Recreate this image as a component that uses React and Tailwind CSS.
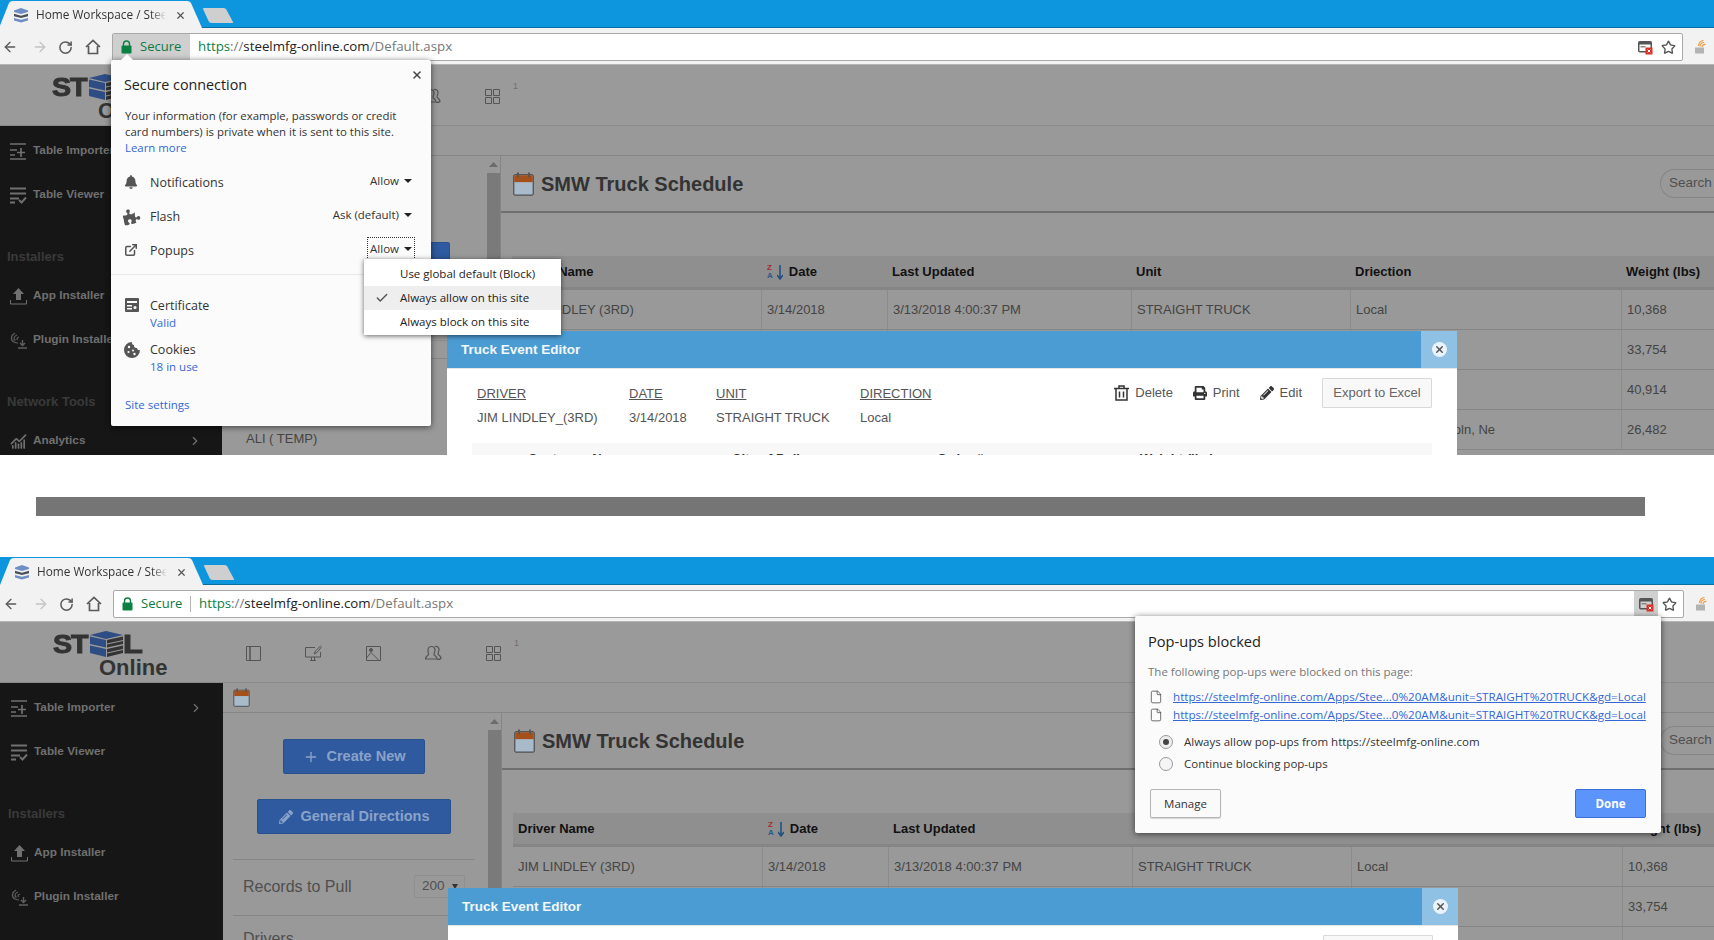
import { ArrowLeft, ArrowRight, RotateCw, Star, X, Check, ChevronRight, Plus, File, ExternalLink, ChartNoAxesCombined } from 'lucide-react'
import { FaBell, FaPuzzlePiece, FaPencilAlt, FaPrint } from 'react-icons/fa'

const uiFont = "font-['Open_Sans',sans-serif]"
const pageFont = "font-['Liberation_Sans',sans-serif]"

function Caret() {
    return (
        <svg width="8" height="4" viewBox="0 0 8 4" className="ml-[5px]">
            <path d="M0 0h8L4 4z" fill="#222" />
        </svg>
    )
}

function Lock() {
    return (
        <svg width="11" height="14" viewBox="0 0 11 14">
            <path d="M2.5 6V4a3 3 0 0 1 6 0v2" fill="none" stroke="#0b8043" strokeWidth="1.4" />
            <rect x="0.5" y="5.5" width="10" height="8" rx="1" fill="#0b8043" />
        </svg>
    )
}

function StackIcon() {
    return (
        <svg width="16" height="16" viewBox="0 0 16 16">
            <path d="M1 3.5 8 1l7 2.5v1.6L8 7 1 5.1z" fill="#6f8fc4" />
            <path d="M1 6.8 8 8.7l7-1.900v2.400L8 11 1 9.200z" fill="#4a4f5a" />
            <path d="M1 10.900 8 12.700l7-1.800v2.600L8 15.500l-7-2z" fill="#6f8fc4" />
        </svg>
    )
}

function CalendarIcon({ className }) {
    return (
        <svg viewBox="0 0 22 26" className={className}>
            <rect x="0.5" y="3" width="21" height="22" rx="1" fill="#a9bbcb" stroke="#333" />
            <rect x="1" y="3.5" width="20" height="7.5" fill="#a4501c" />
            <rect x="4" y="0.5" width="2" height="5" fill="#555" />
            <rect x="16" y="0.5" width="2" height="5" fill="#555" />
        </svg>
    )
}

function ImporterIcon() {
    return (
        <svg width="17" height="17" viewBox="0 0 17 17" fill="none" stroke="#707070" strokeWidth="1.7">
            <path d="M0 1h16M0 7h7M0 12h5M0 16h16M11 5v9M7 9.500h8" />
        </svg>
    )
}

function ViewerIcon() {
    return (
        <svg width="17" height="17" viewBox="0 0 17 17" fill="none" stroke="#707070" strokeWidth="1.900">
            <path d="M0 1.500h16M0 6.500h16M0 11.500h9M0 15.500h5M9 13l2.500 2.500L16 10.500" />
        </svg>
    )
}

function UploadIcon() {
    return (
        <svg width="17" height="17" viewBox="0 0 17 17">
            <path d="M8.500 0 14 6h-3v6H6V6H3z" fill="#707070" />
            <path d="M.5 12v4h16v-4" fill="none" stroke="#707070" />
        </svg>
    )
}

function PluginIcon() {
    return (
        <svg width="17" height="17" viewBox="0 0 17 17" fill="none" stroke="#5f5f5f" strokeWidth="1.200">
            <path d="M5 1C1 3 0 8 4 10c1 .5 2 1 4 1M7 3C4 4 3 7 5.500 8.500M9 5C7 5.500 6.500 7 7.500 8" />
            <path d="M12.500 8v5M10 11l2.500 2.500L15 11M8 16h9" strokeWidth="1.400" />
        </svg>
    )
}

function PopupBlockedIcon() {
    return (
        <svg width="15" height="15" viewBox="0 0 15 15">
            <rect x="0.75" y="1.750" width="12.500" height="10" rx="1" fill="none" stroke="#555" strokeWidth="1.500" />
            <rect x="1" y="2" width="12" height="2.500" fill="#555" />
            <rect x="2.500" y="6" width="5" height="1.500" fill="#888" />
            <rect x="7.500" y="7.500" width="7" height="7" fill="#d93025" />
            <path d="M9.700 9.700l2.600 2.600m0-2.600-2.600 2.600" stroke="#fff" strokeWidth="1" />
        </svg>
    )
}

function HomeIcon() {
    return (
        <svg width="16" height="16" viewBox="0 0 16 16" fill="none" stroke="#5a5a5a" strokeWidth="1.700">
            <path d="M1 8 8 1.500 15 8M3.500 7v7.500h9V7" />
        </svg>
    )
}

function ExtensionIcon() {
    return (
        <svg width="14" height="14" viewBox="0 0 14 14" fill="none">
            <path d="M1 7.500h9v6H1z" fill="#b3b3b3" />
            <path d="M6 6.500a4 4 0 0 1 4-4M8 7a3 3 0 0 1 3.500-2.500M4.500 6a6 6 0 0 1 5-5.500" stroke="#ef9a45" strokeWidth="1.200" />
        </svg>
    )
}

function TrashIcon() {
    return (
        <svg width="15" height="16" viewBox="0 0 15 16" fill="none" stroke="#333" strokeWidth="1.500">
            <path d="M0 3.500h15M5 3.500V1h5v2.500M2 3.500v11.500h11V3.500M5.500 6.500v6M9.500 6.500v6" />
        </svg>
    )
}

function CookieIcon() {
    return (
        <svg width="16" height="16" viewBox="0 0 16 16">
            <path d="M8 0a8 8 0 1 0 8 8c-1.500.5-3-.5-3-2-1.500.5-3.500-1-3-3C8.500 3 7.500 1.500 8 0z" fill="#555" />
            <circle cx="5" cy="5" r="1.200" fill="#fbfbfb" />
            <circle cx="4.500" cy="10" r="1.100" fill="#fbfbfb" />
            <circle cx="9" cy="8.500" r="1" fill="#fbfbfb" />
            <circle cx="10.500" cy="12" r="1.200" fill="#fbfbfb" />
        </svg>
    )
}

function SidebarItem({ icon, label, chevron }) {
    return (
        <div className="flex h-[44px] items-center pl-[11px] pr-[20px]">
            <span className="flex w-[23px] shrink-0">{icon}</span>
            <span className="text-[11.800px] font-bold text-[#707070]">{label}</span>
            {chevron && <ChevronRight className="ml-auto size-[14px] text-[#707070]" />}
        </div>
    )
}

function SidebarHeading({ label, className }) {
    return <div className={`flex h-[32px] items-center pl-[8px] text-[13px] font-bold text-[#3a3a3a] ${className}`}>{label}</div>
}

function Sidebar() {
    return (
        <aside className="w-[223px] shrink-0 bg-[#161616] pt-[3px]">
            <SidebarItem icon={<ImporterIcon />} label="Table Importer" chevron />
            <SidebarItem icon={<ViewerIcon />} label="Table Viewer" />
            <SidebarHeading label="Installers" className="mt-[24px]" />
            <div className="mt-px" />
            <SidebarItem icon={<UploadIcon />} label="App Installer" />
            <SidebarItem icon={<PluginIcon />} label="Plugin Installer" />
            <SidebarHeading label="Network Tools" className="mt-[24px]" />
            <div className="mt-px" />
            <SidebarItem icon={<ChartNoAxesCombined className="size-[17px] text-[#707070]" strokeWidth={2.4} />} label="Analytics" chevron />
        </aside>
    )
}

function LeftPanel() {
    return (
        <div className="w-[264px] shrink-0 pl-[10px] pr-[12px] pt-[26px]">
            <button className="mx-auto flex h-[35px] w-[142px] items-center justify-center gap-[8px] rounded-[2px] border border-[#27528f] bg-[#2f5a9f] text-[14.500px] font-bold text-[#8ba3c9]">
                <Plus className="size-[16px]" strokeWidth={2} />
                Create New
            </button>
            <button className="mx-auto mt-[25px] flex h-[35px] w-[194px] items-center justify-center gap-[8px] rounded-[2px] border border-[#27528f] bg-[#2f5a9f] text-[14.500px] font-bold text-[#8ba3c9]">
                <FaPencilAlt className="size-[14px]" />
                General Directions
            </button>
            <div className="mt-[25px] flex h-[57px] items-center border-y border-[#858585] pb-[2px] pl-[10px] pr-[10px]">
                <span className="text-[16px] text-[#4f4f4f]">Records to Pull</span>
                <span className="ml-auto flex h-[23px] w-[51px] items-center gap-[7px] rounded-[2px] border border-[#8f8f8f] pl-[7px] text-[13.500px] text-[#4f4f4f]">
                    200
                    <svg width="6" height="5" viewBox="0 0 6 5"><path d="M0 0h6L3 5z" fill="#333" /></svg>
                </span>
            </div>
            <div className="mt-[11px] pl-[10px] text-[16px] text-[#4f4f4f]">Drivers</div>
            <div className="mt-[35px] pl-[14px] text-[13px] text-[#444]">ALI ( TEMP)</div>
        </div>
    )
}

function Scrollbar() {
    return (
        <div className="flex w-[14px] shrink-0 flex-col items-center">
            <div className="flex h-[17px] items-center justify-center">
                <svg width="9" height="5" viewBox="0 0 9 5"><path d="M0 5h9L4.500 0z" fill="#6c6c6c" /></svg>
            </div>
            <div className="w-[13px] flex-1 bg-[#7a7a7a]" />
        </div>
    )
}

const columns = 'grid grid-cols-[249px_126px_244px_219px_271px_92px]'

function Row({ cells }) {
    return (
        <div className={`${columns} h-[40px] items-stretch border-b border-[#858585] text-[13px] text-[#444]`}>
            {cells.map((cell, i) => (
                <div key={i} className={`flex items-center pl-[5px] ${i > 0 ? 'border-l border-[#8b8b8b]' : ''}`}>
                    {cell}
                </div>
            ))}
        </div>
    )
}

function ScheduleTable() {
    return (
        <div className="mt-[43px]">
            <div className={`${columns} h-[34px] items-center border-b-[3px] border-[#858585] bg-[#8f8f8f] pt-[1px] text-[13px] font-bold text-[#111]`}>
                <div className="pl-[5px]">Driver Name</div>
                <div className="flex items-center pl-[6px]">
                    <span className="mr-[4px] flex flex-col text-[8px] font-bold leading-[8px]">
                        <span className="text-[#a62b2b]">Z</span>
                        <span className="text-[#2a5a8a]">A</span>
                    </span>
                    <svg width="6" height="15" viewBox="0 0 6 15" className="mr-[6px]"><path d="M3 0v13M0 10l3 4 3-4" fill="none" stroke="#1f4f7f" strokeWidth="1.500" /></svg>
                    Date
                </div>
                <div className="pl-[5px]">Last Updated</div>
                <div className="pl-[5px]">Unit</div>
                <div className="pl-[5px]">Driection</div>
                <div className="pl-[5px]">Weight (lbs)</div>
            </div>
            <Row cells={['JIM LINDLEY (3RD)', '3/14/2018', '3/13/2018 4:00:37 PM', 'STRAIGHT TRUCK', 'Local', '10,368']} />
            <Row cells={['', '', '', '', '', '33,754']} />
            <Row cells={['', '', '', '', '', '40,914']} />
            <Row cells={['', '', '', '', <span className="pl-[74px]">Lincoln, Ne</span>, '26,482']} />
        </div>
    )
}

function RightPanel() {
    return (
        <div className="flex-1 border-l border-[#858585]">
            <div className="flex h-[57px] items-center border-b-2 border-[#6f6f6f] pl-[12px]">
                <CalendarIcon className="h-[24px] w-[21px]" />
                <h2 className="ml-[7px] pt-[1px] text-[20px] font-bold text-[#333]">SMW Truck Schedule</h2>
                <div className="ml-auto flex h-[29px] w-[54px] items-center overflow-hidden rounded-l-full border border-r-0 border-[#858585] pl-[8px] text-[13.500px] text-[#4f4f4f]">
                    Search
                </div>
            </div>
            <div className="pl-[11px]">
                <ScheduleTable />
            </div>
        </div>
    )
}

function HeaderIcons() {
    return (
        <div className="flex items-center">
            <div className="flex w-[60px] justify-center">
                <svg width="15" height="15" viewBox="0 0 15 15" fill="none" stroke="#555"><path d="M.5.500h3.500v14H.5zM4 .500h10.500v14H4z" /></svg>
            </div>
            <div className="flex w-[60px] justify-center">
                <svg width="17" height="16" viewBox="0 0 17 16" fill="none" stroke="#555">
                    <path d="M10 2.500H.5v9.500h15V7M5 15.500h6M6.500 12v3.500M9.500 12v3.500" />
                    <path d="M16 .500 10.500 6 9 9l3-1.500L16.500 2" />
                </svg>
            </div>
            <div className="flex w-[60px] justify-center">
                <svg width="15" height="15" viewBox="0 0 15 15" fill="none" stroke="#555">
                    <path d="M.5.500h14v14H.5zM.5 12 5 6.500l8 8" />
                    <circle cx="5" cy="4" r="1.500" fill="#555" />
                </svg>
            </div>
            <div className="flex w-[60px] justify-center">
                <svg width="17" height="16" viewBox="0 0 17 16" fill="none" stroke="#555" strokeWidth="1.200">
                    <path d="M3 5a3.500 3.500 0 0 1 7 0c0 2-1 3-1 4.500 0 1 3 1.500 3 4.500H.5c0-3 3-3.500 3-4.500C3.500 8 3 7 3 5z" />
                    <path d="M10 1.500a3 3 0 0 1 4 3c0 2-1 3-1 4.500 0 1 3 1.500 3 4.500-.5.500-2 1-4 1" />
                </svg>
            </div>
            <div className="flex w-[60px] justify-center">
                <svg width="15" height="15" viewBox="0 0 15 15" fill="none" stroke="#555"><path d="M.5.500h6v6h-6zM8.500.500h6v6h-6zM.5 8.500h6v6h-6zM8.500 8.500h6v6h-6z" /></svg>
            </div>
            <span className="-mt-[18px] ml-[-9px] text-[9px] text-[#6f6f6f]">1</span>
        </div>
    )
}

function Logo() {
    return (
        <div className="ml-[53px] mt-[9px] flex w-[113px] shrink-0 flex-col text-[#333]">
            <div className="flex h-[26px] items-center">
                <span className="w-[37px] origin-left scale-x-110 text-[26px] font-bold leading-[26px] tracking-[-1px] [-webkit-text-stroke:1px_#333]">ST</span>
                <svg width="33" height="26" viewBox="0 0 33 26">
                    <path d="M0 4 16 0l17 4-17 4z" fill="#2f4d85" />
                    <path d="M0 5.500 16 9v7.500L0 13z" fill="#2f4d85" />
                    <path d="M17 9 33 5.500V9L17 12.500zM17 13.500 33 10v3l-16 3.500z" fill="#333" />
                    <path d="M0 14.500 16 18v8L0 22z" fill="#2f4d85" />
                    <path d="M17 18l16-3.500V18l-16 3.500zM17 22.500 33 19v3l-16 4z" fill="#333" />
                </svg>
                <span className="origin-left scale-x-125 text-[26px] font-bold leading-[26px] [-webkit-text-stroke:1px_#333]">L</span>
            </div>
            <div className="-mt-[1px] pl-[46px] text-[22px] font-bold leading-[24px]">Online</div>
        </div>
    )
}

function Modal() {
    return (
        <div className={`absolute left-[448px] top-[331px] w-[1010px] bg-white ${pageFont}`}>
            <div className="flex h-[37px] items-center justify-between bg-[#4b9cd3] pl-[14px]">
                <span className="pt-[1px] text-[13.500px] font-bold text-[#f3f8fc]">Truck Event Editor</span>
                <div className="flex h-full w-[36px] items-center justify-center bg-[#8fc1e4]">
                    <span className="flex size-[15px] items-center justify-center rounded-full bg-[#eaf3fa]">
                        <X className="size-[11px] text-[#555]" strokeWidth={3.2} />
                    </span>
                </div>
            </div>
            <div className="border-t border-[#e6e6e6] px-[25px] pt-[9px]">
                <div className="flex items-start text-[13px] text-[#555]">
                    <div className="ml-[5px] flex">
                        <div className="w-[152px]">
                            <div className="h-[23px] pt-[8px] leading-[16px] underline">DRIVER</div>
                            <div className="pt-[7px]">JIM LINDLEY_(3RD)</div>
                        </div>
                        <div className="w-[87px]">
                            <div className="h-[23px] pt-[8px] leading-[16px] underline">DATE</div>
                            <div className="pt-[7px]">3/14/2018</div>
                        </div>
                        <div className="w-[144px]">
                            <div className="h-[23px] pt-[8px] leading-[16px] underline">UNIT</div>
                            <div className="pt-[7px]">STRAIGHT TRUCK</div>
                        </div>
                        <div>
                            <div className="h-[23px] pt-[8px] leading-[16px] underline">DIRECTION</div>
                            <div className="pt-[7px]">Local</div>
                        </div>
                    </div>
                    <div className="ml-auto flex items-center">
                        <span className="flex items-center gap-[6px]"><TrashIcon />Delete</span>
                        <span className="ml-[20px] flex items-center gap-[6px]"><FaPrint className="size-[14px] text-[#333]" />Print</span>
                        <span className="ml-[20px] flex items-center gap-[6px]"><FaPencilAlt className="size-[14px] text-[#333]" />Edit</span>
                        <button className="ml-[20px] h-[30px] w-[110px] rounded-[1px] border border-[#d9d9d9] bg-[#f8f8f8] text-[13px] text-[#666]">Export to Excel</button>
                    </div>
                </div>
                <div className="mt-[15px] flex h-[40px] bg-[#f8f8f8] pt-[6px] text-[13px] font-bold text-[#333]">
                    <span className="w-[260px] pl-[56px]">Customer Name</span>
                    <span className="w-[205px]">City of Pull</span>
                    <span className="w-[203px]">Order #</span>
                    <span>Weight (lbs)</span>
                </div>
            </div>
        </div>
    )
}

function SecurePopup() {
    return (
        <div className={`absolute left-[112px] top-[60px] h-[366px] w-[320px] rounded-[2px] bg-[#fbfbfb] pt-[15px] text-[12px] text-[#333] shadow-[0_1px_6px_rgba(0,0,0,0.6)] ${uiFont}`}>
            <svg width="14" height="7" viewBox="0 0 14 7" className="absolute left-[9px] -top-[6px]"><path d="M0 7 7 0l7 7z" fill="#fbfbfb" /></svg>
            <X className="absolute right-[8px] top-[9px] size-[12px] text-[#444]" strokeWidth={3} />
            <div className="h-[20px] pl-[13px] text-[14.300px] leading-[20px] text-[#222]">Secure connection</div>
            <p className="mt-[13px] pl-[14px] text-[11.400px] leading-[16px] text-[#333]">
                Your information (for example, passwords or credit<br />
                card numbers) is private when it is sent to this site.<br />
                <span className="text-[#3367d6]">Learn more</span>
            </p>
            <div className="mt-[9px]">
                {[
                    [<FaBell className="size-[14px] text-[#555]" />, 'Notifications', 'Allow', false],
                    [<FaPuzzlePiece className="-ml-px size-[17px] -rotate-12 text-[#555]" />, 'Flash', 'Ask (default)', false],
                    [<ExternalLink className="size-[14px] text-[#555]" strokeWidth={2.6} />, 'Popups', 'Allow', true],
                ].map(([icon, label, value, focused]) => (
                    <div key={label} className="flex h-[34px] items-center pl-[13px] pr-[19px]">
                        <span className="flex w-[26px]">{icon}</span>
                        <span className="pt-[2px] text-[12.500px]">{label}</span>
                        <span className={`-mt-[3px] ml-auto flex items-center text-[11.500px] ${focused ? 'outline outline-1 outline-dotted outline-[#333] outline-offset-[2px]' : ''}`}>
                            {value}
                            <Caret />
                        </span>
                    </div>
                ))}
            </div>
            <div className="mt-[7px] border-t border-[#e8e8e8]" />
            <div className="mt-[22px] flex pl-[14px]">
                <span className="flex w-[25px] pt-[1px]">
                    <svg width="14" height="14" viewBox="0 0 14 14"><rect width="14" height="14" rx="1" fill="#555" /><path d="M2 3h10v2H2zM2 7h5v1.500H2zM2 10h5v1.500H2z" fill="#fbfbfb" /><circle cx="10" cy="9.500" r="1.500" fill="#fbfbfb" /></svg>
                </span>
                <div className="text-[12.500px] leading-[17px]">
                    Certificate
                    <div className="text-[11.500px] text-[#3367d6]">Valid</div>
                </div>
            </div>
            <div className="mt-[10px] flex pl-[13px]">
                <span className="flex w-[26px] pt-[1px]"><CookieIcon /></span>
                <div className="text-[12.500px] leading-[17px]">
                    Cookies
                    <div className="text-[11.500px] text-[#3367d6]">18 in use</div>
                </div>
            </div>
            <div className="mt-[21px] pl-[14px] text-[11.500px] text-[#3367d6]">Site settings</div>
            <div className="absolute left-[253px] top-[199px] w-[197px] bg-white pb-[1px] pt-[3px] text-[11.500px] text-[#222] shadow-[0_1px_5px_rgba(0,0,0,0.6)]">
                <div className="flex h-[24px] items-center pl-[36px]">Use global default (Block)</div>
                <div className="flex h-[24px] items-center bg-[#eeeeee] pl-[11px]">
                    <Check className="mr-[11px] size-[14px] text-[#555]" strokeWidth={2.5} />
                    Always allow on this site
                </div>
                <div className="flex h-[24px] items-center pl-[36px]">Always block on this site</div>
            </div>
        </div>
    )
}

function BlockedPopup() {
    const url = 'https://steelmfg-online.com/Apps/Stee...0%20AM&unit=STRAIGHT%20TRUCK&gd=Local'
    return (
        <div className={`absolute left-[1135px] top-[59px] h-[217px] w-[526px] rounded-[2px] bg-[#fbfbfb] pl-[13px] pr-[15px] pt-[15px] shadow-[0_1px_6px_rgba(0,0,0,0.6)] ${uiFont}`}>
            <div className="h-[20px] text-[14.600px] leading-[20px] text-[#222]">Pop-ups blocked</div>
            <div className="mt-[13px] h-[16px] text-[11.500px] leading-[16px] text-[#777]">The following pop-ups were blocked on this page:</div>
            <div className="mt-[8px]">
                {[0, 1].map((i) => (
                    <div key={i} className="flex h-[18px] items-center">
                        <File className="ml-[1px] size-[14px] text-[#444]" strokeWidth={1.3} />
                        <a className="ml-[10px] text-[11.650px] text-[#3367d6] underline">{url}</a>
                    </div>
                ))}
            </div>
            <div className="mt-[7px] text-[11.500px] text-[#333]">
                <div className="flex h-[22px] items-center pl-[11px]">
                    <span className="flex size-[14px] items-center justify-center rounded-full border border-[#999] bg-[#eee]">
                        <span className="size-[6px] rounded-full bg-[#444]" />
                    </span>
                    <span className="ml-[11px]">Always allow pop-ups from https://steelmfg-online.com</span>
                </div>
                <div className="flex h-[22px] items-center pl-[11px]">
                    <span className="size-[14px] rounded-full border border-[#999] bg-[#f5f5f5]" />
                    <span className="ml-[11px]">Continue blocking pop-ups</span>
                </div>
            </div>
            <div className="mt-[14px] flex justify-between pl-[2px]">
                <button className="h-[29px] w-[71px] rounded-[2px] border border-[#b5b5b5] bg-[#fafafa] text-[11.500px] text-[#333] shadow-[0_1px_1px_rgba(0,0,0,0.15)]">Manage</button>
                <button className="h-[29px] w-[71px] rounded-[2px] border border-[#3a6fd8] bg-[#5b94fb] text-[11.500px] font-bold text-white">Done</button>
            </div>
        </div>
    )
}

function BrowserChrome({ chip, blockedOpen }) {
    return (
        <div className={uiFont}>
            <div className="relative flex h-[28px] items-start border-b border-[#0a6da3] bg-[#0d95dd]">
                <svg width="240" height="28" viewBox="0 0 240 28" className="absolute left-0 top-0">
                    <path d="M0 28 10 3Q11 1 14 1H188Q191 1 192 3L203 28z" fill="#f2f2f2" />
                    <path d="M204 9Q203 8 206 8H224Q226 8 227 9L234 22Q235 23 233 23H213Q211 23 210 22z" fill="#cfcfcf" />
                </svg>
                <div className="relative flex h-[28px] items-center pl-[14px] pt-[2px]">
                    <StackIcon />
                    <span className="ml-[7px] w-[130px] overflow-hidden whitespace-nowrap text-[11.800px] text-[#333] [mask-image:linear-gradient(to_right,black_88%,transparent)]">Home Workspace / Steel Online</span>
                    <X className="ml-[9px] size-[11px] text-[#555]" strokeWidth={2.6} />
                </div>
            </div>
            <div className="flex h-[37px] items-center border-b border-[#b5b5b5] bg-[#f2f2f2] pt-[2px]">
                <div className="flex w-[113px] shrink-0 items-center">
                    <ArrowLeft className="ml-[3px] size-[16px] text-[#5a5a5a]" strokeWidth={2} />
                    <ArrowRight className="ml-[14px] size-[16px] text-[#c4c4c4]" strokeWidth={2} />
                    <RotateCw className="ml-[10px] size-[15px] text-[#5a5a5a]" strokeWidth={2.4} />
                    <span className="ml-[12px]"><HomeIcon /></span>
                </div>
                <div className="flex h-[28px] w-[1571px] items-center overflow-hidden rounded-[2px] border border-[#a9a9a9] bg-white text-[13.300px]">
                    {chip ? (
                        <div className="flex h-full w-[77px] shrink-0 items-center bg-[#cfcfcf] pl-[8px] text-[13px]">
                            <Lock />
                            <span className="ml-[8px] text-[#0b7a43]">Secure</span>
                        </div>
                    ) : (
                        <div className="flex h-[16px] w-[77px] shrink-0 items-center border-r border-[#b5b5b5] pl-[8px] text-[13px]">
                            <Lock />
                            <span className="ml-[8px] text-[#0b7a43]">Secure</span>
                        </div>
                    )}
                    <span className="ml-[8px]">
                        <span className="text-[#0b8043]">https</span><span className="text-[#777]">://</span><span className="text-[#222]">steelmfg-online.com</span><span className="text-[#777]">/Default.aspx</span>
                    </span>
                    <div className="ml-auto flex items-center">
                        <span className={`flex h-[26px] w-[24px] items-center justify-center ${blockedOpen ? 'bg-[#d0d0d0]' : ''}`}><PopupBlockedIcon /></span>
                        <Star className="ml-[4px] mr-[6px] size-[15px] text-[#555]" strokeWidth={2.2} />
                    </div>
                </div>
                <span className="ml-[11px]"><ExtensionIcon /></span>
            </div>
        </div>
    )
}

function Page() {
    return (
        <div className={pageFont}>
            <div className="flex h-[61px] border-b border-[#8a8a8a] bg-[#9a9a9a]">
                <Logo />
                <div className="ml-[57px] flex items-center pt-[2px]"><HeaderIcons /></div>
            </div>
            <div className="flex bg-[#999999]">
                <Sidebar />
                <div className="flex-1">
                    <div className="flex h-[30px] items-center border-b border-[#858585] pl-[10px]">
                        <CalendarIcon className="h-[19px] w-[17px]" />
                    </div>
                    <div className="flex h-[640px]">
                        <LeftPanel />
                        <Scrollbar />
                        <RightPanel />
                    </div>
                </div>
            </div>
        </div>
    )
}

function Shot({ className, chip, blockedOpen, children }) {
    return (
        <div className={`relative shrink-0 overflow-hidden ${className}`}>
            <BrowserChrome chip={chip} blockedOpen={blockedOpen} />
            <Page />
            <Modal />
            {children}
        </div>
    )
}

export default function App() {
    return (
        <div className="flex h-[940px] w-[1714px] flex-col overflow-hidden bg-white">
            <Shot className="-ml-px h-[455px] w-[1715px]" chip>
                <SecurePopup />
            </Shot>
            <div className="ml-[36px] mt-[42px] h-[19px] w-[1609px] shrink-0 bg-[#757575]" />
            <Shot className="mt-[41px] h-[383px] w-[1714px]" blockedOpen>
                <BlockedPopup />
            </Shot>
        </div>
    )
}
